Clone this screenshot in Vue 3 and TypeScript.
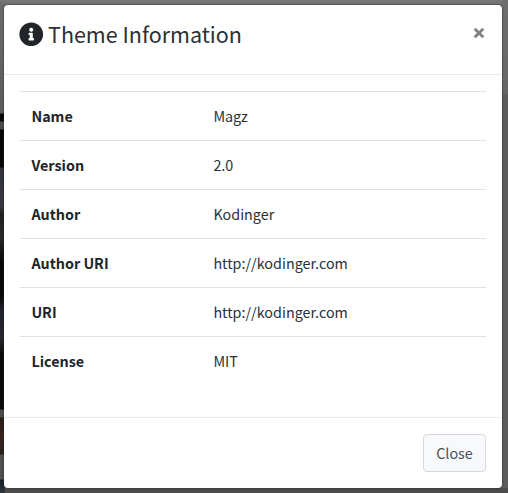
<script setup lang="ts">
interface InfoRow {
  label: string
  value: string
}

const rows: InfoRow[] = [
  { label: 'Name', value: 'Magz' },
  { label: 'Version', value: '2.0' },
  { label: 'Author', value: 'Kodinger' },
  { label: 'Author URI', value: 'http://kodinger.com' },
  { label: 'URI', value: 'http://kodinger.com' },
  { label: 'License', value: 'MIT' },
]
</script>

<template>
  <div class="backdrop">
    <section class="modal" role="dialog" aria-labelledby="modal-title">
      <header class="modal-header">
        <h5 id="modal-title" class="modal-title">
          <svg class="icon" viewBox="0 0 512 512" aria-hidden="true">
            <path
              fill="currentColor"
              d="M256 8C119.043 8 8 119.083 8 256c0 136.997 111.043 248 248 248s248-111.003 248-248C504 119.083 392.957 8 256 8zm0 110c23.196 0 42 18.804 42 42s-18.804 42-42 42-42-18.804-42-42 18.804-42 42-42zm56 254c0 6.627-5.373 12-12 12h-88c-6.627 0-12-5.373-12-12v-24c0-6.627 5.373-12 12-12h12v-64h-12c-6.627 0-12-5.373-12-12v-24c0-6.627 5.373-12 12-12h64c6.627 0 12 5.373 12 12v100h12c6.627 0 12 5.373 12 12v24z"
            />
          </svg>
          <span class="title-text">Theme Information</span>
        </h5>
        <button class="dismiss" type="button" aria-label="Close">
          <svg class="cross" viewBox="0 0 12 12" aria-hidden="true">
            <path d="M1.7 1.7 10.3 10.3M10.3 1.7 1.7 10.3" stroke="currentColor" stroke-width="2.8" />
          </svg>
        </button>
      </header>
      <div class="modal-body">
        <table class="info">
          <tbody>
            <tr v-for="row in rows" :key="row.label">
              <th scope="row">{{ row.label }}</th>
              <td>{{ row.value }}</td>
            </tr>
          </tbody>
        </table>
      </div>
      <footer class="modal-footer">
        <button class="btn" type="button">Close</button>
      </footer>
    </section>
  </div>
</template>

<style>
body {
  margin: 0;
  overflow: hidden;
}
</style>

<style scoped>
* {
  box-sizing: border-box;
}

.backdrop {
  height: 493px;
  padding: 5px 6px 5px 4px;
  background:
    linear-gradient(#6e6e6f, #656565) 100% 0 / 6px 94px no-repeat,
    linear-gradient(#777879, #6f6f70) 0 0 / 100% 5px no-repeat,
    linear-gradient(#4b4b4b, #4b4b4b) 5px 100% / 100% 5px no-repeat,
    linear-gradient(
      #6c6c6c 0, #5b5b5b 113px, #080808 114px, #080808 121px,
      #4b4b4b 122px, #4b4b4b 129px, #070606 130px, #070606 167px,
      #30343a 168px, #35383d 208px, #202020 214px, #292929 235px,
      #080808 262px, #080808 295px, #20242b 312px, #24262a 340px,
      #0b0908 354px, #0b0908 409px, #4b4b4b 410px, #4b4b4b 417px,
      #281b17 418px, #3b241d 438px, #24201d 454px, #505050 455px,
      #505050 479px, #17202a 480px, #303439 493px
    ) 0 0 / 5px 100% no-repeat,
    #5c5c5c;
  color: #212529;
  font-family: "Noto Sans CJK SC", "Open Sans", sans-serif;
  font-size: 14.35px;
  line-height: 24px;
}

.modal {
  display: flex;
  flex-direction: column;
  height: 483px;
  background: #fff;
  border-radius: 4px;
  box-shadow: 0 0 2px #222;
}

.modal-header {
  display: flex;
  align-items: flex-start;
  justify-content: space-between;
  height: 70px;
  padding: 14px 16px 15px 15px;
  border-bottom: 1px solid #e9ecef;
}

.modal-title {
  display: flex;
  align-items: center;
  gap: 4.5px;
  margin: 0;
  font-size: 21.5px;
  font-weight: 400;
  line-height: 30px;
}

.title-text {
  color: #2c3034;
}

.icon {
  width: 24.5px;
  height: 24.5px;
}

.dismiss {
  display: flex;
  padding: 8px 1px;
  border: 0;
  background: none;
  color: #7f7f7f;
}

.cross {
  width: 12px;
  height: 12px;
}

.modal-body {
  flex: 1;
  padding: 16px 16px 16px 15.5px;
}

.info {
  width: 100%;
  border-collapse: separate;
  border-spacing: 0;
  table-layout: fixed;
}

.info th,
.info td {
  height: 49px;
  padding: 12px 12px 12px 11.9px;
  border-top: 1px solid #dee2e6;
  text-align: left;
  vertical-align: top;
}

.info th {
  width: 182px;
  font-weight: 700;
}

.info td {
  color: #2c3034;
}

.modal-footer {
  display: flex;
  justify-content: flex-end;
  height: 71px;
  padding: 16px;
  border-top: 1px solid #e9ecef;
}

.btn {
  width: 63px;
  height: 38px;
  padding: 0;
  border: 1px solid #d5d9dd;
  border-radius: 4px;
  background: #f8f9fa;
  color: #495057;
  font: inherit;
}
</style>
